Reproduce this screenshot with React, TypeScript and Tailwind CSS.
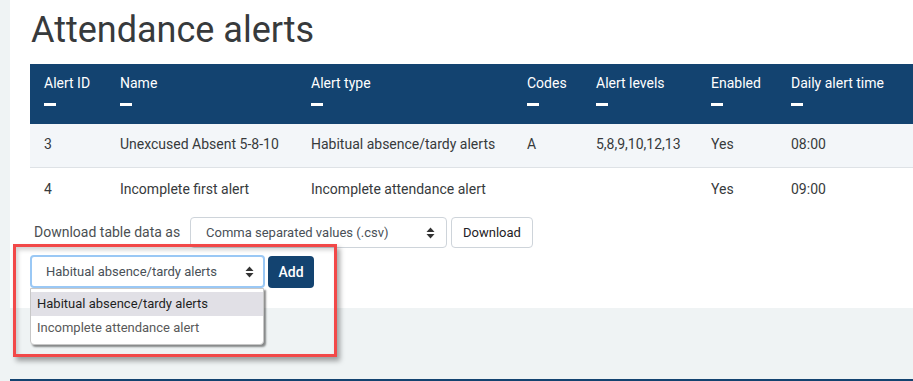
import React from 'react';

const cols = [
  { label: 'Alert ID', w: 'w-[76px]' },
  { label: 'Name', w: 'w-[191px]' },
  { label: 'Alert type', w: 'w-[216px]' },
  { label: 'Codes', w: 'w-[69px]' },
  { label: 'Alert levels', w: 'w-[115px]' },
  { label: 'Enabled', w: 'w-[80px]' },
  { label: 'Daily alert time', w: 'w-[200px]' },
];

const rows = [
  ['3', 'Unexcused Absent 5-8-10', 'Habitual absence/tardy alerts', 'A', '5,8,9,10,12,13', 'Yes', '08:00'],
  ['4', 'Incomplete first alert', 'Incomplete attendance alert', '', '', 'Yes', '09:00'],
];

const Arrows = () => (
  <svg width="9" height="12" viewBox="0 0 9 12" className="shrink-0">
    <path d="M4.5 0.5 L8.5 5 H0.5 Z" fill="#333" />
    <path d="M4.5 11.5 L8.5 7 H0.5 Z" fill="#333" />
  </svg>
);

export default function App() {
  return (
    <div className="relative w-[913px] h-[381px] overflow-hidden flex bg-[#eff3f4] text-[#373a3c] font-['Roboto',_'Liberation_Sans',_sans-serif]">
      <div className="w-[10px] shrink-0 bg-[#eff3f4]" />
      <div className="flex-1 flex flex-col min-w-0">
        <div className="h-[308px] bg-white pl-[20px]">
          <h1 className="h-[64px] pt-[8px] pl-[1px] text-[36px] leading-[44px] font-normal text-[#373a3c] whitespace-nowrap">
            Attendance alerts
          </h1>

          <div className="w-[1000px] text-[14px]">
            <div className="flex h-[60px] bg-[#134370] text-white">
              {cols.map((c) => (
                <div key={c.label} className={`${c.w} shrink-0 pl-[14px] pt-[8px]`}>
                  <div className="leading-[22px] font-normal whitespace-nowrap">{c.label}</div>
                  <div className="mt-[9px] w-[12px] h-[3px] bg-white" />
                </div>
              ))}
            </div>
            {rows.map((r, i) => (
              <div
                key={i}
                className={`flex h-[44px] items-center ${i === 0 ? 'bg-[#f3f6f9] border-b border-[#dee2e6]' : 'bg-white'}`}
              >
                {r.map((v, j) => (
                  <div key={j} className={`${cols[j].w} shrink-0 pl-[14px] whitespace-nowrap leading-[22px] pb-[3px]`}>
                    {v}
                  </div>
                ))}
              </div>
            ))}
          </div>

          <div className="flex items-center mt-[5px] h-[31px]">
            <span className="pl-[4px] w-[160px] text-[14px] text-[#4b4f52] whitespace-nowrap">Download table data as</span>
            <div className="w-[257px] h-[31px] border border-[#ced4da] rounded-[4px] flex items-center justify-between pl-[15px] pr-[11px] text-[13px] text-[#495057]">
              <span className="whitespace-nowrap">Comma separated values (.csv)</span>
              <Arrows />
            </div>
            <button className="ml-[4px] w-[82px] h-[31px] border border-[#ced4da] rounded-[4px] bg-white text-[13px] text-[#1d2125]">
              Download
            </button>
          </div>

          <div className="flex items-start mt-[7px]">
            <div className="relative">
              <div className="w-[235px] h-[33px] border-2 border-[#9ac8f5] rounded-[4px] flex items-center justify-between pl-[14px] pr-[9px] text-[13px] text-[#495057]">
                <span className="whitespace-nowrap">Habitual absence/tardy alerts</span>
                <Arrows />
              </div>
              <div className="absolute left-0 top-[33px] w-[234px] bg-white border border-[#c7c7c7] rounded-b-[4px] pt-[3px] pb-[4px] shadow-[2px_2px_2px_rgba(0,0,0,0.45)] z-10 text-[13px]">
                <div className="h-[24px] leading-[24px] px-[6px] bg-[#e1e0e6] text-[#1f1f1f] whitespace-nowrap">Habitual absence/tardy alerts</div>
                <div className="h-[24px] leading-[24px] px-[6px] text-[#595959] whitespace-nowrap">Incomplete attendance alert</div>
              </div>
            </div>
            <button className="ml-[3px] mt-[1px] w-[46px] h-[32px] rounded-[4px] bg-[#134370] text-white text-[14px] font-medium">
              Add
            </button>
          </div>
        </div>
        <div className="flex-1 bg-[#eff3f4]" />
        <div className="h-[2px] bg-[#134370]" />
      </div>

      <div className="absolute left-[13px] top-[244px] w-[324px] h-[113px] border-[3px] border-[#f24848] shadow-[3px_4px_5px_rgba(0,0,0,0.35),inset_2px_3px_4px_rgba(0,0,0,0.18)] pointer-events-none z-20" />
    </div>
  );
}
